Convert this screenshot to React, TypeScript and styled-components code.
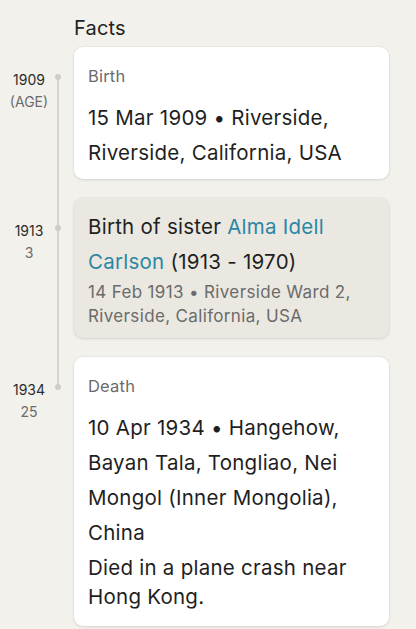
import React from "react";
import styled, { createGlobalStyle } from "styled-components";

const Global = createGlobalStyle`
  html, body {
    margin: 0;
    padding: 0;
    background: #f2f1ec;
  }
  body {
    font-family: Inter, "Noto Sans", "Liberation Sans", sans-serif;
    color: #222222;
    -webkit-font-smoothing: antialiased;
  }
`;

const Page = styled.div`
  padding: 14px 27px 8px 0;
`;

const Title = styled.h2`
  margin: 0 0 5px 74px;
  font-size: 20px;
  line-height: 28px;
  font-weight: 400;
  letter-spacing: 0.2px;
  color: #222;
`;

const List = styled.div`
  display: flex;
  flex-direction: column;
  gap: 19px;
`;

const Row = styled.div`
  display: flex;
  align-items: flex-start;
`;

const Rail = styled.div<{ $last?: boolean }>`
  position: relative;
  width: 74px;
  flex: 0 0 74px;
  align-self: stretch;

  &::before {
    content: "";
    display: ${(p) => (p.$last ? "none" : "block")};
    position: absolute;
    left: 57px;
    top: 30px;
    width: 2px;
    height: calc(100% + 19px);
    background: #d6d4cf;
  }

  &::after {
    content: "";
    position: absolute;
    left: 55px;
    top: 27px;
    width: 6px;
    height: 6px;
    border-radius: 50%;
    background: #cfcdc8;
  }
`;

const YearBox = styled.div`
  width: 58px;
  padding-top: 22px;
  display: flex;
  flex-direction: column;
  align-items: center;
  font-size: 14px;
  line-height: 22px;
`;

const Year = styled.span`
  color: #2a2a2a;
`;

const Age = styled.span`
  color: #6b6b6b;
`;

const Card = styled.div<{ $muted?: boolean }>`
  flex: 1;
  min-width: 0;
  box-sizing: border-box;
  background: ${(p) => (p.$muted ? "#eae8e0" : "#ffffff")};
  border-radius: 9px;
  box-shadow: 0 1px 3px rgba(60, 50, 30, 0.12), 0 0 0 1px rgba(60, 50, 30, 0.03);
  padding: ${(p) => (p.$muted ? "11px 16px 10px 14px" : "17px 16px 9px 14px")};
`;

const Label = styled.div`
  font-size: 16.5px;
  line-height: 24px;
  letter-spacing: 0.2px;
  color: #6b6b6b;
  margin-bottom: 12px;
`;

const Main = styled.div`
  font-size: 20.5px;
  line-height: 35px;
  letter-spacing: 0.25px;
  color: #1f1f1f;
`;

const Note = styled.div`
  font-size: 20.5px;
  line-height: 29px;
  letter-spacing: 0.25px;
  color: #1f1f1f;
  margin-top: 3px;
  padding-bottom: 6px;
`;

const Sub = styled.div`
  font-size: 17px;
  line-height: 24px;
  letter-spacing: 0.35px;
  color: #6b6b6b;
  margin-top: 1px;
`;

const Link = styled.a`
  color: #2a87a5;
  text-decoration: none;
`;

type Fact = {
  year: string;
  age: string;
};

const Timeline: React.FC<Fact & { last?: boolean }> = ({ year, age, last }) => (
  <Rail $last={last}>
    <YearBox>
      <Year>{year}</Year>
      <Age>{age}</Age>
    </YearBox>
  </Rail>
);

export default function App() {
  return (
    <>
      <Global />
      <Page>
        <Title>Facts</Title>
        <List>
          <Row>
            <Timeline year="1909" age="(AGE)" />
            <Card>
              <Label>Birth</Label>
              <Main>15 Mar 1909 • Riverside, Riverside, California, USA</Main>
            </Card>
          </Row>
          <Row>
            <Timeline year="1913" age="3" />
            <Card $muted>
              <Main>
                Birth of sister <Link href="#">Alma Idell Carlson</Link> (1913 - 1970)
              </Main>
              <Sub>14 Feb 1913 • Riverside Ward 2, Riverside, California, USA</Sub>
            </Card>
          </Row>
          <Row>
            <Timeline year="1934" age="25" last />
            <Card>
              <Label>Death</Label>
              <Main>10 Apr 1934 • Hangehow, Bayan Tala, Tongliao, Nei Mongol (Inner Mongolia), China</Main>
              <Note>Died in a plane crash near Hong Kong.</Note>
            </Card>
          </Row>
        </List>
      </Page>
    </>
  );
}
